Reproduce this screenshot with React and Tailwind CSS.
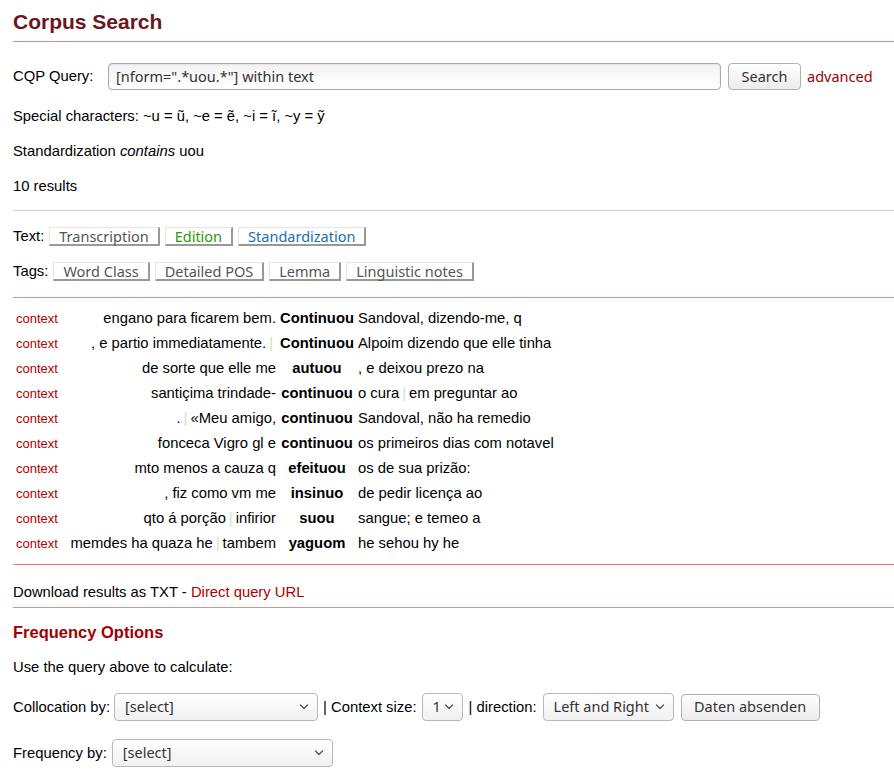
const results = [
  { left: ['engano para ficarem bem.'], kw: 'Continuou', right: ['Sandoval, dizendo-me, q'] },
  { left: [', e partio immediatamente.', ''], kw: 'Continuou', right: ['Alpoim dizendo que elle tinha'] },
  { left: ['de sorte que elle me'], kw: 'autuou', right: [', e deixou prezo na'] },
  { left: ['santiçima trindade-'], kw: 'continuou', right: ['o cura', 'em preguntar ao'] },
  { left: ['.', '«Meu amigo,'], kw: 'continuou', right: ['Sandoval, não ha remedio'] },
  { left: ['fonceca Vigro gl e'], kw: 'continuou', right: ['os primeiros dias com notavel'] },
  { left: ['mto menos a cauza q'], kw: 'efeituou', right: ['os de sua prizão:'] },
  { left: [', fiz como vm me'], kw: 'insinuo', right: ['de pedir licença ao'] },
  { left: ['qto á porção', 'infirior'], kw: 'suou', right: ['sangue; e temeo a'] },
  { left: ['memdes ha quaza he', 'tambem'], kw: 'yaguom', right: ['he sehou hy he'] },
];

const ui = "font-['Noto_Sans','Open_Sans',sans-serif]";

function Parts({ parts }) {
  return parts.map((p, i) => (
    <span key={i}>
      {i > 0 && <span className="mx-[3px] text-[#bfe8c4]">|</span>}
      {p}
    </span>
  ));
}

function TabButton({ children, color = 'text-[#555]' }) {
  return (
    <span
      className={`${ui} ${color} inline-flex h-[19px] items-center border-t border-l border-t-[#e6e6e6] border-l-[#e6e6e6] border-r-2 border-b-2 border-r-[#999] border-b-[#999] bg-white px-[9px] text-[14.5px] leading-none`}
    >
      {children}
    </span>
  );
}

function Chevron() {
  return (
    <svg width="10" height="6" viewBox="0 0 10 6" fill="none" className="shrink-0">
      <path d="M1.5 1l3.5 3.5 3.5-3.5" stroke="#555" strokeWidth="1.3" strokeLinecap="round" strokeLinejoin="round" />
    </svg>
  );
}

function Select({ value, width }) {
  return (
    <div
      className={`${ui} ${width} flex h-[28px] items-center justify-between rounded-[4px] border border-[#b8b8b8] bg-gradient-to-b from-white to-[#f0f0f0] pl-[10px] pr-[8px] text-[14.5px] text-[#333]`}
    >
      <span>{value}</span>
      <Chevron />
    </div>
  );
}

function GrayButton({ children, width }) {
  return (
    <div
      className={`${ui} ${width} flex h-[27px] items-center justify-center rounded-[4px] border border-[#b0b0b0] bg-gradient-to-b from-white to-[#ececec] text-[14.5px] text-[#333]`}
    >
      {children}
    </div>
  );
}

export default function App() {
  return (
    <div className="min-h-[782px] bg-white pl-[13px] font-['Liberation_Sans',Arial,sans-serif] text-[14.8px] text-black">
      <h1 className="mt-[10px] h-[24px] text-[21px] font-bold leading-[24px] text-[#6b1620]">Corpus Search</h1>
      <div className="mt-[7px] border-t border-[#dc8c8c]" />

      <div className="mt-[21px] flex h-[27px] items-center">
        <span className="w-[95px]">CQP Query:</span>
        <div
          className={`${ui} flex h-[27px] w-[613px] items-center rounded-[4px] border border-[#aaa] bg-gradient-to-b from-[#f4f4f4] to-white px-[7px] text-[14.5px] text-[#333] shadow-[inset_0_1px_2px_rgba(0,0,0,0.08)]`}
        >
          [nform=".*uou.*"] within text
        </div>
        <div className="ml-[7px]">
          <GrayButton width="w-[73px]">Search</GrayButton>
        </div>
        <span className={`${ui} ml-[6px] text-[14.5px] text-[#a00000]`}>advanced</span>
      </div>

      <p className="mt-[18px] h-[17px] leading-[17px]">Special characters: ~u = ũ, ~e = ẽ, ~i = ĩ, ~y = ỹ</p>
      <p className="mt-[18px] h-[17px] leading-[17px]">
        Standardization <em>contains</em> uou
      </p>
      <p className="mt-[18px] h-[17px] leading-[17px]">10 results</p>

      <div className="mt-[15px] border-t border-[#d0d0d0]" />

      <div className="mt-[16px] flex h-[19px] items-center gap-[5px]">
        <span>Text:</span>
        <TabButton>Transcription</TabButton>
        <TabButton color="text-[#2e9a00]">Edition</TabButton>
        <TabButton color="text-[#1a6fb0]">Standardization</TabButton>
      </div>
      <div className="mt-[16px] flex h-[19px] items-center gap-[5px]">
        <span>Tags:</span>
        <TabButton>Word Class</TabButton>
        <TabButton>Detailed POS</TabButton>
        <TabButton>Lemma</TabButton>
        <TabButton>Linguistic notes</TabButton>
      </div>

      <div className="mt-[16px] border-t border-[#e29090]" />

      <div className="mt-[8px]">
        {results.map((r, i) => (
          <div key={i} className="grid h-[25px] grid-cols-[50px_214px_80px_1fr] items-center whitespace-nowrap">
            <span className="pl-[3px] text-[13px] text-[#b00000]">context</span>
            <span className="pr-[1px] text-right">
              <Parts parts={r.left} />
            </span>
            <span className="text-center font-bold">{r.kw}</span>
            <span className="pl-[1px]">
              <Parts parts={r.right} />
            </span>
          </div>
        ))}
      </div>

      <div className="mt-[8px] border-t border-[#e87878]" />
      <p className="mt-[19px] h-[17px] leading-[17px]">
        Download results as TXT - <span className="text-[#b00000]">Direct query URL</span>
      </p>
      <div className="mt-[6px] border-t border-[#e29090]" />

      <h2 className="mt-[14px] h-[20px] text-[16.5px] font-bold leading-[20px] text-[#a00000]">Frequency Options</h2>
      <p className="mt-[17px] h-[17px] leading-[17px]">Use the query above to calculate:</p>

      <div className="mt-[17px] flex h-[28px] items-center">
        <span className="mr-[4px]">Collocation by:</span>
        <Select value="[select]" width="w-[204px]" />
        <span className="mx-[5px]">| Context size:</span>
        <Select value="1" width="w-[41px]" />
        <span className="mx-[6px]">| direction:</span>
        <Select value="Left and Right" width="w-[131px]" />
        <div className="ml-[7px]">
          <GrayButton width="w-[139px]">Daten absenden</GrayButton>
        </div>
      </div>

      <div className="mt-[18px] flex h-[28px] items-center">
        <span className="mr-[5px]">Frequency by:</span>
        <Select value="[select]" width="w-[221px]" />
      </div>
    </div>
  );
}
